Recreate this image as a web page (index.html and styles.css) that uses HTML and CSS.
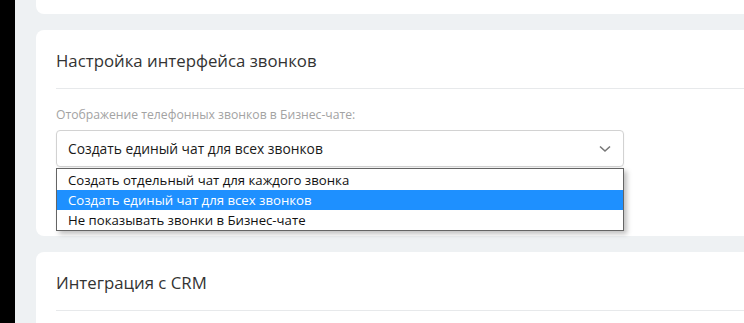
FILE: index.html
```html
<!DOCTYPE html>
<html lang="ru">
<head>
    <meta charset="UTF-8">
    <meta name="viewport" content="width=device-width, initial-scale=1.0">
    <title>Настройки телефонии</title>
    <link rel="stylesheet" href="styles.css">
</head>
<body>

<div class="side"></div>

<div class="content">
    <div class="card card-top"></div>

    <div class="card">
        <div class="card-head">Настройка интерфейса звонков</div>
        <div class="card-body">
            <label class="field-label" for="callsView">Отображение телефонных звонков в Бизнес-чате:</label>
            <div class="select-wrap">
                <div class="select" id="callsView">
                    <span>Создать единый чат для всех звонков</span>
                    <svg class="chevron" width="12" height="8" viewBox="0 0 12 8">
                        <path d="M1 1.5 L6 6 L11 1.5" fill="none" stroke="#777" stroke-width="1.6"/>
                    </svg>
                </div>
                <ul class="options">
                    <li>Создать отдельный чат для каждого звонка</li>
                    <li class="active">Создать единый чат для всех звонков</li>
                    <li>Не показывать звонки в Бизнес-чате</li>
                </ul>
            </div>
        </div>
    </div>

    <div class="card">
        <div class="card-head">Интеграция с CRM</div>
        <div class="card-body"></div>
    </div>
</div>

</body>
</html>
```

FILE: styles.css
```css
body {
    margin: 0;
    display: flex;
    height: 323px;
    overflow: hidden;
    font-family: 'Open Sans', 'Noto Sans', sans-serif;
    background: #eef1f3;
}
.side {
    width: 15px;
    flex-shrink: 0;
    background: #000;
}
.content {
    flex: 1;
    padding-left: 21px;
}
.card {
    background: #fff;
    border-radius: 8px 0 0 8px;
    margin-bottom: 16px;
}
.card-top {
    height: 14px;
    border-radius: 0 0 0 8px;
}
.card-head {
    margin-left: 20px;
    height: 59px;
    box-sizing: border-box;
    padding-top: 19px;
    border-bottom: 1px solid #e7e9eb;
    font-size: 16.8px;
    color: #333;
}
.card-body {
    padding: 17px 0 0 20px;
    height: 147px;
    box-sizing: border-box;
}
.field-label {
    display: block;
    font-size: 12.2px;
    color: #a3a3a3;
    margin-bottom: 7px;
}
.select-wrap {
    position: relative;
    width: 568px;
}
.select {
    display: flex;
    justify-content: space-between;
    align-items: center;
    height: 37px;
    box-sizing: border-box;
    padding: 0 12px 0 11px;
    border: 1px solid #d2d2d2;
    border-radius: 4px;
    box-shadow: 0 1px 2px rgba(0, 0, 0, 0.06);
    font-size: 13.8px;
    color: #1a1a1a;
}
.options {
    position: absolute;
    left: 0;
    top: 38px;
    width: 100%;
    box-sizing: border-box;
    margin: 0;
    padding: 0;
    list-style: none;
    background: #fff;
    border: 1px solid #646464;
    box-shadow: 3px 3px 5px rgba(0, 0, 0, 0.25);
    font-size: 13.2px;
    color: #111;
}
.options li {
    height: 20px;
    line-height: 20px;
    padding-left: 11px;
}
.options li:first-child {
    padding-top: 1px;
}
.options li.active {
    background: #1e90ff;
    color: #fff;
}
```
